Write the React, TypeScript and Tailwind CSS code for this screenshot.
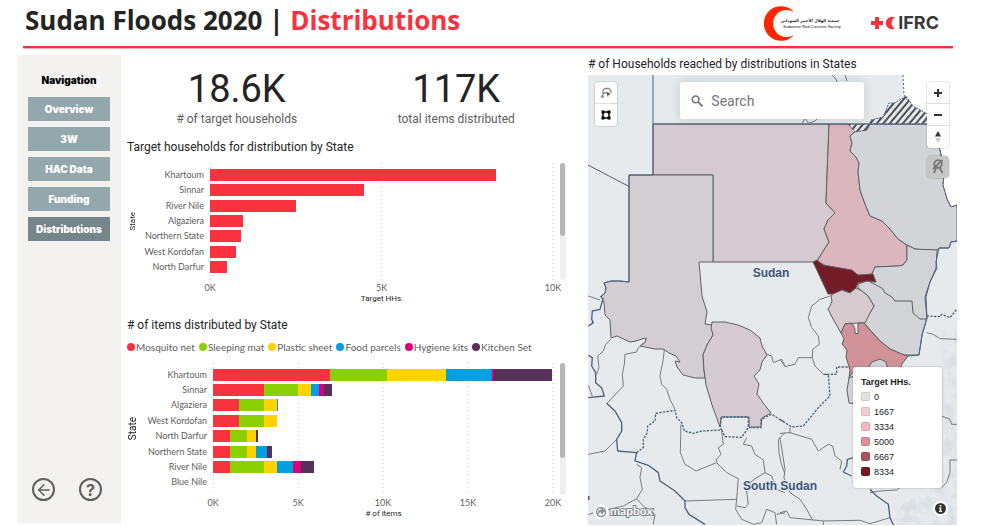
import { ArrowLeft } from "lucide-react";
import type { ReactNode } from "react";

const navItems = ["Overview", "3W", "HAC Data", "Funding", "Distributions"];

const households = [
  { state: "Khartoum", value: 8334 },
  { state: "Sinnar", value: 4500 },
  { state: "River Nile", value: 2500 },
  { state: "Algaziera", value: 970 },
  { state: "Northern State", value: 900 },
  { state: "West Kordofan", value: 750 },
  { state: "North Darfur", value: 500 },
];

const series = [
  { name: "Mosquito net", color: "bg-[#f8333f]" },
  { name: "Sleeping mat", color: "bg-[#8ad000]" },
  { name: "Plastic sheet", color: "bg-[#ffd200]" },
  { name: "Food parcels", color: "bg-[#009fdf]" },
  { name: "Hygiene kits", color: "bg-[#d9007a]" },
  { name: "Kitchen Set", color: "bg-[#57305c]" },
];

const items = [
  { state: "Khartoum", values: [6900, 3350, 3480, 2660, 130, 3440] },
  { state: "Sinnar", values: [3000, 2000, 750, 500, 250, 500] },
  { state: "Algaziera", values: [1500, 1500, 750, 100, 0, 0] },
  { state: "West Kordofan", values: [1500, 1500, 750, 0, 0, 0] },
  { state: "North Darfur", values: [1000, 1000, 500, 0, 0, 150] },
  { state: "Northern State", values: [1000, 1000, 500, 700, 0, 250] },
  { state: "River Nile", values: [1000, 2000, 750, 950, 500, 760] },
  { state: "Blue Nile", values: [0, 0, 0, 0, 0, 0] },
];

const legend = [
  { label: "0", color: "bg-[#e3e3e5]" },
  { label: "1667", color: "bg-[#edcfd3]" },
  { label: "3334", color: "bg-[#f8b8bd]" },
  { label: "5000", color: "bg-[#e08e95]" },
  { label: "6667", color: "bg-[#ad525c]" },
  { label: "8334", color: "bg-[#791821]" },
];

function Kpi({ value, label }: { value: string; label: string }) {
  return (
    <div className="text-center">
      <div className="text-[38px] leading-9 text-[#252423]">{value}</div>
      <div className="mt-1 text-[12px] leading-4 text-[#605e5c]">{label}</div>
    </div>
  );
}

function ChartTitle({ children }: { children: ReactNode }) {
  return <h2 className="text-[12px] leading-4 text-[#252423]">{children}</h2>;
}

function Chart({
  labels,
  ticks,
  axis,
  thumb,
  stateSize,
  labelWidth,
  children,
}: {
  labels: string[];
  ticks: string[];
  axis: string;
  thumb: string;
  stateSize: string;
  labelWidth: string;
  children: ReactNode;
}) {
  return (
    <div className="grid grid-cols-[11px_auto_1fr_6px]">
      <div className="flex items-center justify-center">
        <span className={`rotate-180 leading-[11px] text-[#252423] [writing-mode:vertical-rl] ${stateSize}`}>State</span>
      </div>
      <div className={`flex flex-col pt-1 pb-[5px] text-right font-['Lato',sans-serif] text-[9px] text-[#605e5c] ${labelWidth}`}>
        {labels.map((l) => (
          <div key={l} className="flex flex-1 items-center justify-end leading-3 whitespace-nowrap">
            {l}
          </div>
        ))}
      </div>
      <div className="mr-[7px] ml-[6px] grid">
        <div className="col-start-1 row-start-1 flex justify-between">
          {ticks.map((t) => (
            <div key={t} className="w-px bg-[repeating-linear-gradient(to_bottom,#d2d0ce_0px,#d2d0ce_1px,transparent_1px,transparent_4px)]" />
          ))}
        </div>
        <div className="col-start-1 row-start-1 flex flex-col pt-1 pb-[5px]">{children}</div>
      </div>
      <div className="rounded-full bg-[#efefef]">
        <div className={`w-[5px] rounded-full bg-[#b5b5b5] ${thumb}`} />
      </div>
      <div className="col-start-3 -mr-[5px] -ml-[6px] flex justify-between pt-0.5 font-['Lato',sans-serif] text-[9px] leading-3 text-[#605e5c]">
        {ticks.map((t) => (
          <span key={t} className="w-6 text-center">
            {t}
          </span>
        ))}
      </div>
      <div className="col-start-3 text-center text-[8px] leading-[10px] text-[#252423]">{axis}</div>
    </div>
  );
}

function CrescentLogo() {
  return (
    <svg width="88" height="40" viewBox="762 3 88 40" aria-label="Sudanese Red Crescent Society">
      <path d="M795 12A17.3 17.3 0 1 0 795 35A13.6 13.6 0 1 1 795 12Z" fill="#ff2600" />
      <text x="811" y="22" textAnchor="middle" direction="rtl" className="fill-[#222] font-['DejaVu_Sans',sans-serif] text-[4px] font-bold">
        جمعية الهلال الأحمر السوداني
      </text>
      <text x="784" y="28" className="fill-[#111] font-['Liberation_Sans',sans-serif] text-[4px]">
        Sudanese Red Crescent Society
      </text>
    </svg>
  );
}

function IfrcLogo() {
  return (
    <div className="flex items-center">
      <svg width="27" height="16" viewBox="870 16 27 16" aria-hidden="true">
        <path d="M874 18h4v4h4v4h-4v4h-4v-4h-4v-4h4z" fill="#f5333f" />
        <path d="M894 18.600A6.200 6.200 0 1 0 894 29.400A6 6 0 0 1 894 18.600Z" fill="#f5333f" />
      </svg>
      <span className="font-['Inter',sans-serif] text-[18px] leading-5 font-bold text-[#3a3a3c]">IFRC</span>
    </div>
  );
}

function MapDrawing() {
  return (
    <svg className="absolute inset-0 h-full w-full" viewBox="588 75 369 450" preserveAspectRatio="xMidYMid slice">
      <defs>
        <pattern id="hatch" width="5" height="5" patternUnits="userSpaceOnUse" patternTransform="rotate(40)">
          <rect width="5" height="5" fill="#e6eaed" />
          <rect width="2" height="5" fill="#4c4f53" />
        </pattern>
        <filter id="relief" x="0" y="0" width="1" height="1">
          <feTurbulence type="fractalNoise" baseFrequency="0.09" numOctaves="3" seed="4" />
          <feColorMatrix values="0 0 0 0 0.68  0 0 0 0 0.72  0 0 0 0 0.77  4 0 0 0 -1.6" />
          <feComposite in2="SourceGraphic" operator="in" />
        </filter>
      </defs>
      <rect x="588" y="75" width="369" height="450" fill="#e6eaed" />
      <path d="M942 330H957V525H890L905 500L940 485Z" filter="url(#relief)" opacity=".7" />
      <path d="M903 75L904 94L907 100L914 107L927 114L940 150L944 170L943 185L947 199L951 207L957 205V75Z" fill="#fff" />
      <path d="M588 165L630 187" stroke="#4a6280" fill="none" />
      <g stroke="#5f6064" strokeWidth="1" strokeLinejoin="round">
        <path fill="#d5cacf" d="M653 124H829L826 203L835 213L828 220L824 229L829 242L817 261L813 262H713V175H653Z" />
        <path fill="#dcb6be" d="M829 124H849L856 131L850 136L852 143L850 151L856 157L859 163L858 172L860 190L865 204L870 216L882 221L890 229L898 239L907 245V260L903 265L898 266L875 267L872 274L859 276L850 272L835 268L824 265L817 261L829 242L824 229L828 220L835 213L826 203Z" />
        <path fill="#d2d4d8" d="M856 131L867 130L870 124H931L940 150L944 170L943 185L947 199L951 207L957 205V241L951 242L949 248L939 248L937 250H925L915 249L907 245L898 239L890 229L882 221L870 216L865 204L860 190L858 172L859 163L856 157L850 151L852 143L850 136Z" />
        <path fill="#d2d4d8" d="M907 245L915 249L937 250L936 268L930 282L926 297L927 318L922 335L919 355L904 355L890 349L880 341L864 323L874 306L868 296L858 288V284L867 281L876 282L872 274L875 267L898 266L903 265L907 260Z" />
        <path fill="none" d="M870 282L880 287L883 289L885 293L892 297L895 301H912L913 313L920 319L927 319" />
        <path fill="#731c27" d="M813 262L817 260L823 265L852 270L858 275L873 274L876 282L867 281L858 283L856 288L850 293L842 290L835 294H828Z" />
        <path fill="#d6cacf" d="M833 294L842 290L850 293L856 288L862 291L868 296L874 306L870 313L865 323L858 323L845 324L841 333L837 326L833 319L828 309L830 306L832 301L831 295Z" />
        <path fill="#d09298" d="M845 324L852 323L855 329L855 333L858 334L858 323L864 323L868 328L880 341L890 349L904 355L908 356L902 364L899 372H853L849 378L850 370L846 357L847 350L842 344L844 339L841 333Z" />
        <path fill="#d2d4d8" d="M867 370L872 362L880 359L886 362L888 370Z" />
        <path fill="#d2d4d8" d="M849 378L847 390L849 403L856 404V375Z" />
        <path fill="#d2ced2" d="M629 175H713V262H699L702 296L707 312L705 324L712 325L713 335L707 345L703 355L704 370L705 378L695 378L683 375L677 367L675 361L680 362L676 356L669 353L663 349L655 349L640 346L646 341L645 338L636 341L630 342L617 336L611 338L610 320L605 315L604 302L601 297L605 293L606 288L604 283L611 281L620 281L629 282Z" />
        <path fill="#d5cbd0" d="M712 322L725 322L738 325L750 330L760 338L762 346L767 355L762 362L760 370L754 376L759 384L757 394L764 404L771 413L762 418L761 427H749V417H721L720 427L712 405L706 385L704 370L703 355L707 345L713 335L711 328Z" />
      </g>
      <path d="M848 124L855 132L867 130L871 120L883 117L889 103L895 103L906 96L913 106L931 116V124Z" fill="url(#hatch)" stroke="#4a6280" strokeDasharray="2 1" />
      <g fill="none" stroke="#4a6280" strokeWidth="1">
        <path d="M653 75V175H629V282L620 281L611 281L604 283L606 288L605 293L600 297M653 124H829M829 124H931" />
        <path d="M903 75L904 94L907 100M940 150L944 170L943 185L947 199L951 207L957 205" strokeDasharray="2 2" />
        <path d="M957 241L951 242L949 248L939 248L936 262L937 268L930 282L925 297L927 318L922 335L919 355L908 356" />
      </g>
      <path d="M832 75L835 78L838 83M845 75L847 81M802 124L805 118L809 124M807 124L815 121L819 117" fill="none" stroke="#777c83" />
      <g fill="none" stroke="#77797d" strokeWidth="3" strokeLinejoin="round" transform="translate(585 296) scale(.3333)">
        <path d="M78 130L62 145L55 165L38 180L42 215L35 235M185 125L180 140L160 155L155 168L120 175L118 205L112 235L115 270L65 323M238 160L235 190L225 240L230 265L245 280L255 310L270 340M288 385L286 470L300 505L333 525L395 500L395 490L408 475L400 455L415 445L410 405M395 500L425 530L460 548L455 610L300 615M455 610L452 640L470 670L505 685M485 425L475 445L500 450L510 475L535 492L540 530L500 555L485 585L490 625L480 635L455 630M540 530L560 540L575 580L600 590M505 685L530 680L545 640L570 650L575 685M600 650L575 655M600 410L580 430L582 470L588 500L600 535M545 175L560 180L565 200L590 190L600 210M10 475L60 465L80 445L95 430M155 505L170 515L165 545L172 580L155 608L115 630L10 655M155 608L175 630L210 655L205 685M10 268L22 300M10 0L45 12" />
      </g>
      <g fill="none" stroke="#77797d" strokeWidth="3" strokeLinejoin="round" transform="translate(780 296) scale(.3333)">
        <path d="M150 0L120 10L95 30L85 65L95 95L115 120L118 145L98 160L97 185L105 210L130 235M0 190L15 212L45 205L55 185L97 185M0 412L30 410L95 430L115 465L145 445L158 450L165 480L185 495L180 520M0 425L15 520L12 545L30 590L60 610L80 640L98 673M0 650L20 645L30 665L130 675L240 673L270 683L330 665M130 675V690M30 395V412M270 590L300 585L350 582L360 575M485 360L510 370L515 385L531 385M440 110L460 115L480 128L530 130" />
        <path d="M531 492H510V530L500 560L485 575" />
      </g>
      <g fill="none" stroke="#4a6280" strokeWidth="4" strokeLinejoin="round" transform="translate(585 296) scale(.3333)">
        <path d="M55 5L45 40L22 45L20 70L25 80L10 90M10 178L22 185L20 210L32 230L32 260L50 275L58 300L10 305M65 322L90 345L110 380L110 405L95 430L98 465L155 470L150 495L190 508L220 530L225 555L270 585L300 615L300 635L312 655L360 685" />
        <path strokeDasharray="7 4" d="M155 470L175 455L175 430L187 410L188 390L210 375L212 352L270 343L275 365L290 380L298 405L325 412L350 405L410 402L405 395L410 363H490V395M410 402L420 422L470 424L490 395H528V370L560 355L600 380" />
      </g>
      <g fill="none" stroke="#4a6280" strokeWidth="4" strokeLinejoin="round" transform="translate(780 296) scale(.3333)">
        <path d="M220 485L202 490L200 510L190 528L215 540M270 580L290 600L325 625L330 665L342 690" />
        <path strokeDasharray="7 4" d="M0 370L35 393L70 390L115 335L150 300L145 235H130M130 235H170V213H210M440 60L480 62L485 55L510 65L530 40" />
      </g>
      <g className="fill-[#3f5778] font-['Liberation_Sans',sans-serif] text-[12px] font-bold" textAnchor="middle" stroke="#e6eaed" strokeWidth="2" paintOrder="stroke">
        <text x="771" y="277">Sudan</text>
        <text x="780" y="490">South Sudan</text>
      </g>
      <path d="M588 496V500" stroke="#3f5778" strokeWidth="3" />
      <g>
        <circle cx="601" cy="512" r="5.500" fill="none" stroke="#fff" strokeWidth="4" />
        <circle cx="601" cy="512" r="4.500" fill="#fff" stroke="#8b9097" strokeWidth="1.500" />
        <path d="M602 508l1 2 2 1-2 1-1 2-1-2-2-1 2-1zM597 515q3-1 2-5" fill="#8b9097" stroke="#8b9097" />
        <text x="610" y="515" className="fill-white font-['Lato',sans-serif] text-[12px] font-bold" stroke="#7f858c" strokeWidth="2" paintOrder="stroke">
          mapbox
        </text>
      </g>
    </svg>
  );
}

const mapButton = "flex h-[22px] w-[22px] items-center justify-center";
const mapGroup = "flex flex-col divide-y divide-[#dddddd] rounded-[4px] bg-white shadow-[0_0_0_1px_#0000001a]";

function HouseholdMap() {
  return (
    <div className="relative min-h-[450px] flex-1 overflow-hidden">
      <MapDrawing />
      <div className={`absolute top-[7px] left-[7px] ${mapGroup}`}>
        <button type="button" aria-label="Lasso select" className={mapButton}>
          <svg width="12" height="12" viewBox="0 0 12 12" fill="none" stroke="#8a8a8a" strokeWidth="1.300">
            <path d="M1 10L3 8V3L5 1.500H9L11 4V6M3 6H6M1 10H4" />
            <path d="M6 4.500L11 7L8.500 8L8 10.500Z" fill="#555" stroke="none" />
          </svg>
        </button>
        <button type="button" aria-label="Rectangle select" className={mapButton}>
          <svg width="10" height="10" viewBox="0 0 10 10">
            <rect x="2" y="2" width="6" height="6" fill="none" stroke="#000" strokeWidth="1.500" />
            <path d="M.5.5h3v3h-3zM6.500.5h3v3h-3zM.5 6.500h3v3h-3zM6.500 6.500h3v3h-3z" />
          </svg>
        </button>
      </div>
      <label className="absolute top-[7px] right-[93px] left-[92px] flex h-[37px] items-center rounded-[3px] bg-white pl-[11px] shadow-[0_0_8px_2px_#0000001a]">
        <svg width="14" height="14" viewBox="0 0 14 14" fill="none" stroke="#757575" strokeWidth="1.800" aria-hidden="true">
          <circle cx="5.200" cy="5.200" r="3.800" />
          <path d="M8 8L13 13" strokeWidth="2.200" />
        </svg>
        <input type="search" aria-label="Search" placeholder="Search" className="ml-2 w-full min-w-0 bg-transparent text-[14px] leading-5 outline-none placeholder:text-[#757575]" />
      </label>
      <div className="absolute top-[7px] right-[8px] flex flex-col gap-2">
        <div className={mapGroup}>
          <button type="button" aria-label="Zoom in" className={mapButton}>
            <svg width="10" height="10" stroke="#333" strokeWidth="2">
              <path d="M5 1V9M1 5H9" />
            </svg>
          </button>
          <button type="button" aria-label="Zoom out" className={mapButton}>
            <svg width="10" height="10" stroke="#333" strokeWidth="2">
              <path d="M1 5H9" />
            </svg>
          </button>
          <button type="button" aria-label="Reset north" className={mapButton}>
            <svg width="8" height="12">
              <path d="M1 5.500L4 0L7 5.500Z" fill="#333" />
              <path d="M1 7L4 12L7 7Z" fill="#ccc" />
            </svg>
          </button>
        </div>
        <button type="button" aria-label="Reset selection" className={`rounded-[4px] bg-[#c6c6c6] shadow-[0_0_0_1px_#0000001a] ${mapButton}`}>
          <svg width="12" height="16" viewBox="0 0 12 16" fill="none" stroke="#777" strokeWidth="1.800">
            <circle cx="6" cy="5" r="3.800" />
            <path d="M4.500 8L2 14M7.500 8L10.500 14M10.500 1L1 10" />
          </svg>
        </button>
      </div>
      <div className="absolute right-[15px] bottom-[37px] w-[89px] rounded-[3px] bg-white pt-[9px] pb-[9px] pl-2 font-['Liberation_Sans',sans-serif] text-[#222] shadow-[0_0_2px_#00000055]">
        <div className="text-[9px] leading-3 font-bold">Target HHs.</div>
        <ul className="mt-px text-[9px]">
          {legend.map((l) => (
            <li key={l.label} className="flex h-[15px] items-center gap-1 leading-3">
              <span className={`h-[9px] w-[9px] rounded-[2px] border border-black/10 ${l.color}`} />
              {l.label}
            </li>
          ))}
        </ul>
      </div>
      <button type="button" aria-label="Map information" className="absolute right-[9px] bottom-[9px] flex h-[15px] w-[15px] items-center justify-center rounded-full bg-white">
        <svg width="11" height="11" viewBox="0 0 11 11">
          <circle cx="5.500" cy="5.500" r="5.500" fill="#333" />
          <path d="M4 4.500H6.300V8H7V9H4V8H4.700V5.500H4zM4.700 2H6.300V3.500H4.700z" fill="#fff" />
        </svg>
      </button>
    </div>
  );
}

export default function App() {
  return (
    <div className="bg-white font-['Roboto',sans-serif]">
      <header className="mr-8 ml-[23px]">
        <div className="flex h-[46px] items-center justify-between pr-[14px]">
          <h1 className="ml-[2px] pb-[6px] font-['Open_Sans',sans-serif] text-[26px] leading-[34px] font-bold whitespace-nowrap text-[#252423]">
            Sudan Floods 2020 | <span className="text-[#f8333f]">Distributions</span>
          </h1>
          <div className="flex items-center gap-[22px]">
            <CrescentLogo />
            <IfrcLogo />
          </div>
        </div>
        <div className="h-[3px] border-b border-[#fbaab0] bg-[#f8333f]" />
      </header>
      <main className="mt-[6px] grid grid-cols-[104px_minmax(0,467fr)_minmax(0,369fr)] pr-7 pl-[17px]">
        <nav className="mb-[2px] flex flex-col bg-[#f3f2f1] px-[11px] pt-[17px] pb-[22px] font-['Inter',sans-serif]">
          <h2 className="text-center text-[10px] leading-4 font-black text-black">Navigation</h2>
          <ul className="mt-[9px] flex flex-col gap-[6px]">
            {navItems.map((n) => (
              <li key={n}>
                <button
                  type="button"
                  className={`block h-6 w-full text-[10px] leading-4 font-black text-white ${n === "Distributions" ? "bg-[#768589]" : "bg-[#93a7ad]"}`}
                >
                  {n}
                </button>
              </li>
            ))}
          </ul>
          <div className="mt-auto flex gap-6 px-1">
            <button type="button" aria-label="Back" className="flex h-[23px] w-[23px] items-center justify-center rounded-full border-2 border-[#605e5c]">
              <ArrowLeft size={18} strokeWidth={2} color="#605e5c" className="shrink-0" />
            </button>
            <button type="button" aria-label="Help" className="flex h-[23px] w-[23px] items-center justify-center rounded-full border-2 border-[#605e5c] text-[16px] leading-4 font-bold text-[#605e5c]">
              ?
            </button>
          </div>
        </nav>
        <section className="flex flex-col pr-[22px] pl-[6px]">
          <div className="grid grid-cols-2 pt-4">
            <Kpi value="18.6K" label="# of target households" />
            <Kpi value="117K" label="total items distributed" />
          </div>
          <div className="mt-3 flex flex-col gap-2">
            <ChartTitle>Target households for distribution by State</ChartTitle>
            <Chart labels={households.map((h) => h.state)} ticks={["0K", "5K", "10K"]} axis="Target HHs." thumb="h-[73px]" stateSize="text-[8px]" labelWidth="w-[66px]">
              <div className="flex h-[108px] flex-col">
                {households.map((h) => (
                  <div key={h.state} className="flex flex-1 items-center">
                    <div className="h-3 bg-[#f8333f]" style={{ width: `${h.value / 100}%` }} />
                  </div>
                ))}
              </div>
            </Chart>
          </div>
          <div className="mt-[13px] flex flex-col">
            <ChartTitle># of items distributed by State</ChartTitle>
            <ul className="mt-[6px] flex gap-1 font-['Lato',sans-serif] text-[10px] leading-4 whitespace-nowrap text-[#605e5c]">
              {series.map((s) => (
                <li key={s.name} className="flex items-center gap-px">
                  <span className={`h-2 w-2 rounded-full ${s.color}`} />
                  {s.name}
                </li>
              ))}
            </ul>
            <div className="mt-2">
              <Chart labels={items.map((i) => i.state)} ticks={["0K", "5K", "10K", "15K", "20K"]} axis="# of items" thumb="h-[95px]" stateSize="text-[10px]" labelWidth="w-[69px]">
                <div className="flex h-[123px] flex-col">
                  {items.map((i) => (
                    <div key={i.state} className="flex flex-1 items-center">
                      {i.values.map((v, k) => (
                        <div key={series[k].name} className={`h-3 ${series[k].color}`} style={{ width: `${v / 200}%` }} />
                      ))}
                    </div>
                  ))}
                </div>
              </Chart>
            </div>
          </div>
        </section>
        <section className="flex flex-col">
          <div className="pt-px pb-[3px]">
            <ChartTitle># of Households reached by distributions in States</ChartTitle>
          </div>
          <HouseholdMap />
        </section>
      </main>
    </div>
  );
}
